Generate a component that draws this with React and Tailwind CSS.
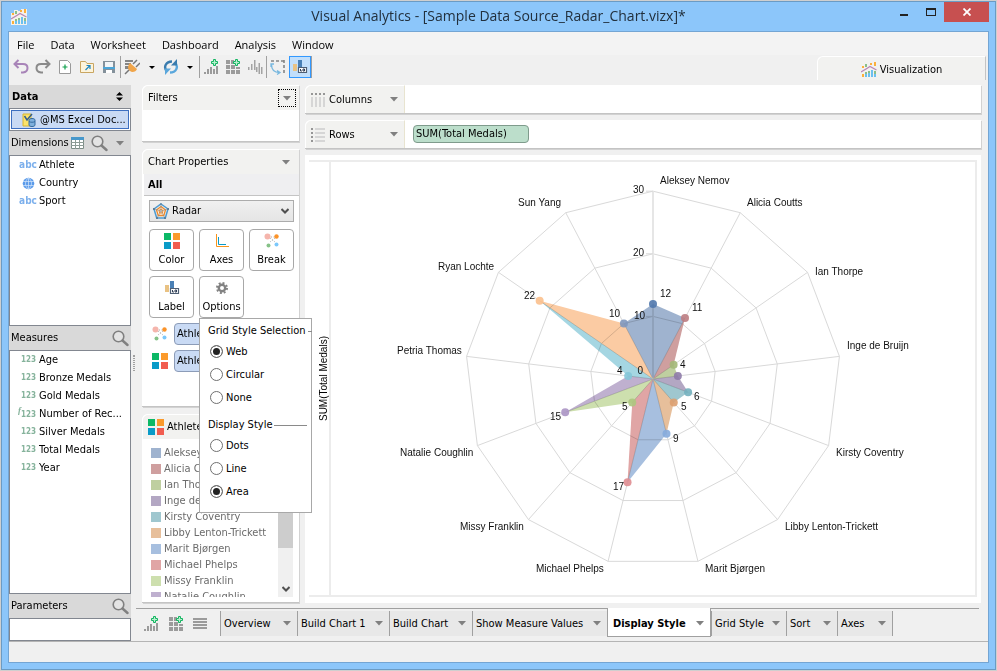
import { useState } from 'react';

const measures = [
  'Age',
  'Bronze Medals',
  'Gold Medals',
  'Number of Rec...',
  'Silver Medals',
  'Total Medals',
  'Year',
];

// color is the tint used for the legend swatch and the sector, dot is the marker
const athletes = [
  { name: 'Aleksey Nemov', value: 12, color: '#9fb3cf', dot: '#5078ad', lx: 660, ly: 184, vx: 660, vy: 297 },
  { name: 'Alicia Coutts', value: 11, color: '#cf9f9f', dot: '#bd7d82', lx: 747, ly: 206, vx: 692, vy: 311 },
  { name: 'Ian Thorpe', value: 4, color: '#bfcfa0', dot: '#a3b878', lx: 815, ly: 275, vx: 680, vy: 368 },
  { name: 'Inge de Bruijn', value: 4, color: '#b3a7c3', dot: '#8e7ba8', lx: 847, ly: 349, vx: 0, vy: 0 },
  { name: 'Kirsty Coventry', value: 6, color: '#9fc7cf', dot: '#73b0be', lx: 836, ly: 456, vx: 694, vy: 400 },
  { name: 'Libby Lenton-Trickett', value: 5, color: '#e7bf9b', dot: '#dda070', lx: 785, ly: 530, vx: 681, vy: 410 },
  { name: 'Marit Bjørgen', value: 9, color: '#a7bfdf', dot: '#86abdc', lx: 705, ly: 572, vx: 673, vy: 442 },
  { name: 'Michael Phelps', value: 17, color: '#e0a5a5', dot: '#df8c90', lx: 536, ly: 572, vx: 613, vy: 490 },
  { name: 'Missy Franklin', value: 5, color: '#cddfae', dot: '#adc77f', lx: 460, ly: 530, vx: 622, vy: 410 },
  { name: 'Natalie Coughlin', value: 15, color: '#bfb0cf', dot: '#ab95c4', lx: 400, ly: 456, vx: 550, vy: 420 },
  { name: 'Petria Thomas', value: 4, color: '#a5d6e2', dot: '#84c6d8', lx: 397, ly: 354, vx: 617, vy: 374 },
  { name: 'Ryan Lochte', value: 22, color: '#fbcba3', dot: '#fbc08d', lx: 438, ly: 270, vx: 524, vy: 299 },
  { name: 'Sun Yang', value: 10, color: '#9fb3cf', dot: '#7f97bd', lx: 518, ly: 206, vx: 609, vy: 317 },
];

const sheets = [
  { name: 'Overview', width: 'w-[77px]' },
  { name: 'Build Chart 1', width: 'w-[92px]' },
  { name: 'Build Chart', width: 'w-[83px]' },
  { name: 'Show Measure Values', width: 'w-[135px]' },
  { name: 'Display Style', width: 'w-[104px]' },
  { name: 'Grid Style', width: 'w-[75px]' },
  { name: 'Sort', width: 'w-[51px]' },
  { name: 'Axes', width: 'w-[56px]' },
];

const CX = 653;
const CY = 379;
const UNIT = 6.26;

const point = (index, value) => {
  const angle = (index * 2 * Math.PI) / athletes.length;
  return [CX + Math.sin(angle) * value * UNIT, CY - Math.cos(angle) * value * UNIT];
};

const Caret = () => (
  <svg width="8" height="5" viewBox="0 0 8 5" className="shrink-0">
    <path d="M0 0h8L4 4.500z" fill="#808080" />
  </svg>
);

const LogoIcon = ({ tile }) => (
  <svg width="16" height="16" viewBox="0 0 16 16" className="shrink-0">
    {tile && <path d="M0 4h3V1h4v1h3V0h6v16H0z" fill="#f4f1ec" />}
    <path d="M1 4h2v2H1zM9 1h2v2H9zM13 0h2v4h-2zM1 12h2v3H1z" fill="#fbb03b" />
    <path d="M4 2h2v3H4zM4 10h2v2H4zM7 9h2v2H7zM13 9h2v3h-2z" fill="#8cbf88" />
    <path d="M4 12h2v3H4zM7 11h2v4H7zM10 8h2v7h-2zM13 12h2v3h-2z" fill="#6cc0ee" />
    <path d="M0 10l5-3 4-2.500L15.500 8" fill="none" stroke="#b987b4" strokeWidth="1.300" />
  </svg>
);

const PlusBadge = ({ x, y }) => (
  <path
    transform={`translate(${x} ${y})`}
    d="M2.500 0.500h2v2h2v2h-2v2h-2v-2h-2v-2h2z"
    fill="#b9efcf"
    stroke="#12b560"
  />
);

const AddChartIcon = () => (
  <svg width="16" height="16" viewBox="0 0 16 16">
    <path d="M1 13h2v2H1zM4 10h2v5H4zM7 8h2v7H7zM10 10h2v5h-2zM13 7h2v8h-2z" fill="#9b9b9b" />
    <PlusBadge x={8} y={0} />
  </svg>
);

const AddDashboardIcon = () => (
  <svg width="16" height="16" viewBox="0 0 16 16">
    <path d="M1 1h4v4H1zM6 1h3v4H6zM1 6h4v4H1zM6 6h4v4H6zM11 8h4v2h-4zM1 11h4v4H1zM6 11h4v4H6zM11 11h4v4h-4z" fill="#9b9b9b" />
    <PlusBadge x={8} y={0} />
  </svg>
);

const SearchIcon = () => (
  <svg width="17" height="17" viewBox="0 0 17 17">
    <circle cx="6.500" cy="6.500" r="5.300" fill="#e4e4e4" stroke="#808080" strokeWidth="1.600" />
    <path d="M10.500 10.500l5 4.500" stroke="#808080" strokeWidth="2.400" strokeLinecap="round" />
  </svg>
);

const ColorIcon = () => (
  <svg width="16" height="16" viewBox="0 0 16 16" className="shrink-0">
    <path d="M0 0h7v7H0z" fill="#0cb866" />
    <path d="M9 0h7v7H9z" fill="#fb9a2c" />
    <path d="M0 9h7v7H0z" fill="#0a9bc8" />
    <path d="M9 9h7v7H9z" fill="#f15d50" />
  </svg>
);

const BreakIcon = () => (
  <svg width="16" height="16" viewBox="0 0 16 16" className="shrink-0">
    <path d="M6 5l5 4M11 5L6 9M7 4h4" stroke="#aaa" strokeDasharray="1 1.500" />
    <circle cx="3.500" cy="3.500" r="3" fill="#f5b5ac" />
    <circle cx="12.500" cy="3.500" r="2.200" fill="#fb9329" />
    <circle cx="4.500" cy="12.500" r="2" fill="#86c288" />
    <circle cx="12.500" cy="11.500" r="2" fill="#7cc8fb" />
  </svg>
);

const LabelIcon = () => (
  <svg width="16" height="16" viewBox="0 0 16 16" className="shrink-0">
    <path d="M1 5h4v7H1z" fill="#e9c283" />
    <path d="M6 1h4v7H6z" fill="#4a80b5" />
    <path d="M6.500 8.500h8v5h-8z" fill="#fff" stroke="#4f5f74" strokeWidth="1.200" />
    <path d="M8.500 10v2h1.500M11 10h1.500v2H11z" fill="none" stroke="#2f3d54" />
  </svg>
);

const AxesIcon = () => (
  <svg width="16" height="16" viewBox="0 0 16 16">
    <path d="M2.500 1v12.500H15" fill="none" stroke="#f8941d" />
    <path d="M4.500 4v7.500H12" fill="none" stroke="#0a9bc8" />
  </svg>
);

const GearIcon = () => (
  <svg width="16" height="16" viewBox="0 0 16 16">
    <circle cx="8" cy="8" r="3.200" fill="none" stroke="#828282" strokeWidth="2.400" />
    <circle cx="8" cy="8" r="5" fill="none" stroke="#828282" strokeWidth="2" strokeDasharray="1.960 1.960" />
  </svg>
);

const RadarIcon = () => (
  <svg width="16" height="16" viewBox="0 0 16 16">
    <path d="M8 1l7 5-2.700 9H3.700L1 6z" fill="#e3eef6" stroke="#4d9ad0" strokeWidth="1.500" />
    <path d="M8 3.500l4.500 3.500-1.700 5.500H5.200L3.500 7z" fill="#fdeedd" stroke="#ef8a2b" strokeWidth="1.300" />
    <path d="M8 6l2 1.500-.7 2.500H6.700L6 7.500z" fill="none" stroke="#ef8a2b" />
    <path d="M8 1v7l7-2M8 8l4 7M8 8l-4 7M8 8L1 6" stroke="#8a8a8a" strokeWidth="0.600" fill="none" />
    <path d="M7.500 0h1v2h-1zM0 5h2v2H0zM14 5h2v2h-2zM3 14h2v2H3zM11 14h2v2h-2z" fill="#5b7f9c" />
  </svg>
);

const GlobeIcon = () => (
  <svg width="13" height="13" viewBox="0 0 13 13">
    <circle cx="6.500" cy="6.500" r="5.800" fill="#5b9bea" />
    <path d="M1 4.500h11M1 8.500h11M6.500 0v13M6.500.7C2.500 4 2.500 9 6.500 12.300M6.500.7c4 3.300 4 8.300 0 11.600" fill="none" stroke="#d5e6fb" strokeWidth="0.700" />
  </svg>
);

const ToolButton = ({ label, active, width = 'w-[22px]', children }) => (
  <button
    aria-label={label}
    className={`flex h-[22px] items-center justify-center ${width} ${active ? 'border border-[#3399ff] bg-[#c2dffb]' : ''}`}
  >
    {children}
  </button>
);

const Separator = () => <div className="h-[22px] w-px bg-[#a0a0a0]" />;

const PanelHeader = ({ title, children }) => (
  <div className="flex h-[25px] shrink-0 items-center justify-between rounded-tl-md border-t border-l border-white bg-[#f2f2f0] pr-[9px] pl-[5px]">
    <h2>{title}</h2>
    {children}
  </div>
);

const Shelf = ({ title, icon, children }) => (
  <div className="flex h-[29px] shrink-0 rounded-tl-md border-b border-[#c4c4c4] bg-white shadow-[1px_1px_0_#d2d2d2]">
    <button className="flex w-[100px] shrink-0 items-center rounded-tl-md border-t border-r border-l border-t-white border-r-[#e8e4d0] border-l-white bg-[#f2f2f0] pr-[6px] pl-[5px]">
      {icon}
      <span className="flex-1 pl-1 text-left">{title}</span>
      <Caret />
    </button>
    <div className="flex flex-1 items-center pl-2">{children}</div>
  </div>
);

const CardButton = ({ label, icon }) => (
  <button className="flex h-[42px] w-[45px] flex-col items-center justify-between rounded border border-[#a8a8a8] bg-white pt-[3px] pb-[2px]">
    {icon}
    <span>{label}</span>
  </button>
);

const RadioGroup = ({ title, name, options, value, onChange }) => (
  <div role="radiogroup" aria-label={title}>
    <div className="flex h-[18px] items-center gap-[2px]">
      <span className="whitespace-nowrap">{title}</span>
      <span className="h-px min-w-1 flex-1 bg-[#8a8a8a]" />
    </div>
    {options.map(option => (
      <label key={option} className="flex h-[23px] items-center gap-[3px] pl-[2px]">
        <input
          type="radio"
          name={name}
          checked={value === option}
          onChange={() => onChange(option)}
          className="h-[13px] w-[13px] appearance-none rounded-full border border-[#707070] bg-white checked:bg-[#222] checked:shadow-[inset_0_0_0_2px_white]"
        />
        {option}
      </label>
    ))}
  </div>
);

const RadarChart = () => {
  const ring = value => athletes.map((_, i) => point(i, value).join(',')).join(' ');

  return (
    <svg viewBox="331 162 644 433" className="h-full min-h-0 w-full" fontFamily='"Liberation Sans", Arial, sans-serif' fontSize="10">
      <g fill="none" stroke="#d9d9d9">
        {[10, 20, 30].map(value => (
          <polygon key={value} points={ring(value)} />
        ))}
        {athletes.map((athlete, i) => {
          const [x, y] = point(i, 30);
          return <line key={athlete.name} x1={CX} y1={CY} x2={x} y2={y} />;
        })}
        <line x1={CX} y1={CY} x2={CX} y2={CY - 30 * UNIT} stroke="#e6e6e6" strokeWidth="2" />
        {[10, 20, 30].map(value => (
          <line key={value} x1={CX - 7} x2={CX} y1={CY - value * UNIT} y2={CY - value * UNIT} />
        ))}
      </g>
      {athletes.map((athlete, i) => {
        const next = (i + 1) % athletes.length;
        const [x1, y1] = point(i, athlete.value);
        const [x2, y2] = point(next, athletes[next].value);
        return (
          <polygon
            key={athlete.name}
            points={`${CX},${CY} ${x1},${y1} ${x2},${y2}`}
            fill={athlete.color}
            className="mix-blend-multiply"
          />
        );
      })}
      {athletes.map((athlete, i) => {
        const [x, y] = point(i, athlete.value);
        return <circle key={athlete.name} cx={x} cy={y} r="4" fill={athlete.dot} fillOpacity="0.9" />;
      })}
      <g fill="#111">
        <text x="644" y="193" textAnchor="end">30</text>
        <text x="644" y="256" textAnchor="end">20</text>
        <text x="645" y="319" textAnchor="end">10</text>
        <text x="643" y="374" textAnchor="end">0</text>
        {athletes.map(athlete => (
          <text key={athlete.name} x={athlete.lx} y={athlete.ly}>{athlete.name}</text>
        ))}
        {athletes.filter(athlete => athlete.vx).map(athlete => (
          <text key={athlete.name} x={athlete.vx} y={athlete.vy}>{athlete.value}</text>
        ))}
      </g>
    </svg>
  );
};

const App = () => {
  const [gridStyle, setGridStyle] = useState('Web');
  const [displayStyle, setDisplayStyle] = useState('Area');
  const [activeSheet, setActiveSheet] = useState('Display Style');

  return (
    <div className="h-screen bg-[#cfcfcf] p-px font-['DejaVu_Sans_Condensed','Noto_Sans',sans-serif] text-[11px] leading-4 text-black">
      <div className="flex h-full flex-col border border-[#6b9bc4] bg-[#8cc6fa] px-[6px] pb-[6px]">
        {/* Title bar */}
        <header className="flex h-[29px] shrink-0 items-start">
          <div className="flex h-full w-[102px] items-center pl-[3px]">
            <LogoIcon tile />
          </div>
          <h1 className="flex-1 pt-1 text-center font-['Open_Sans','Noto_Sans',sans-serif] text-[14px] leading-5 text-[#22303d]">
            Visual Analytics - [Sample Data Source_Radar_Chart.vizx]*
          </h1>
          <div className="flex h-5 w-[102px] items-center justify-end">
            <button aria-label="Minimize" className="flex h-5 w-[27px] items-center justify-center pt-[5px]">
              <span className="h-[2px] w-2 bg-[#222]" />
            </button>
            <button aria-label="Maximize" className="flex h-5 w-[27px] items-center justify-center">
              <span className="h-2 w-[10px] border border-t-2 border-[#222]" />
            </button>
            <button aria-label="Close" className="flex h-5 w-[45px] items-center justify-center bg-[#c75050]">
              <svg width="8" height="8" viewBox="0 0 8 8">
                <path d="M0.500 0.500l7 7M7.500 0.500l-7 7" stroke="#fff" strokeWidth="1.800" />
              </svg>
            </button>
          </div>
        </header>

        <div className="flex min-h-0 flex-1 flex-col border border-[#74a5d3] bg-[#f0f0f0]">
          <nav className="flex h-[23px] shrink-0 items-center gap-4 bg-[#f3f3f3] pl-2 pt-[2px] font-['Open_Sans','Noto_Sans',sans-serif] text-[11px]">
            {['File', 'Data', 'Worksheet', 'Dashboard', 'Analysis', 'Window'].map(item => (
              <button key={item}>{item}</button>
            ))}
          </nav>

          {/* Toolbar */}
          <div className="flex h-[30px] shrink-0 items-start justify-between pt-px pr-[2px]">
            <div className="flex items-center pl-px">
              <ToolButton label="Undo">
                <svg width="16" height="16" viewBox="0 0 16 16">
                  <path d="M5.500 1L1.500 5l4 4M2 5h8c6 0 6 8 0 8.500H8" fill="none" stroke="#a884b8" strokeWidth="2" />
                </svg>
              </ToolButton>
              <ToolButton label="Redo">
                <svg width="16" height="16" viewBox="0 0 16 16">
                  <path d="M10.500 1l4 4-4 4M14 5H6c-6 0-6 8 0 8.500h2" fill="none" stroke="#8a8a8a" strokeWidth="2" />
                </svg>
              </ToolButton>
              <ToolButton label="New">
                <svg width="16" height="16" viewBox="0 0 16 16">
                  <path d="M2.500 1.500h8l3 3v10h-11z" fill="#fff" stroke="#9a9a9a" />
                  <path d="M8 5.500v5M5.500 8h5" stroke="#10a04c" strokeWidth="1.200" />
                </svg>
              </ToolButton>
              <ToolButton label="Open">
                <svg width="16" height="16" viewBox="0 0 16 16">
                  <path d="M1.500 2.500h5l1.500 2h6.500v9h-13z" fill="#fdf4dc" stroke="#c9a662" />
                  <path d="M6.500 11l4-4M7.500 6.500h3.500V10" fill="none" stroke="#1f86c0" strokeWidth="1.200" />
                </svg>
              </ToolButton>
              <ToolButton label="Save">
                <svg width="16" height="16" viewBox="0 0 16 16">
                  <path d="M2 2h12v12H2z" fill="#84919b" />
                  <path d="M4 3h8v5H4z" fill="#f1f5f8" />
                  <path d="M2 8h12v2H2z" fill="#4aa5d8" />
                  <path d="M5 11h6v3H5z" fill="#fff" />
                </svg>
              </ToolButton>
              <Separator />
              <ToolButton label="Connect">
                <svg width="16" height="16" viewBox="0 0 16 16">
                  <path d="M1 1h8v2H1zM1 4h6v2H1zM1 7h4v3H1z" fill="#858585" />
                  <path d="M6 4l7 6c-1 3-5 4-7 2-3-2-2-6 0-8z" fill="#f0a54a" />
                  <path d="M9 5l4-4M12 8l4-4M5 11l-4 4" stroke="#777" strokeWidth="1.500" />
                </svg>
              </ToolButton>
              <ToolButton label="Connect options" width="w-[18px]">
                <svg width="6" height="3" viewBox="0 0 6 3"><path d="M0 0h6L3 3z" /></svg>
              </ToolButton>
              <ToolButton label="Refresh" width="w-5">
                <svg width="16" height="16" viewBox="0 0 16 16" fill="none">
                  <path d="M4 12.500C0 8 3 2.500 9 2.500" stroke="#3a7cae" strokeWidth="2.400" />
                  <path d="M12 3.500c4 4.500 1 10-5 10" stroke="#5aa7dc" strokeWidth="2.400" />
                  <path d="M14 0v6.500H8z" fill="#3a7cae" />
                  <path d="M2 16V9.500h6z" fill="#5aa7dc" />
                </svg>
              </ToolButton>
              <ToolButton label="Refresh options" width="w-[18px]">
                <svg width="6" height="3" viewBox="0 0 6 3"><path d="M0 0h6L3 3z" /></svg>
              </ToolButton>
              <Separator />
              <ToolButton label="Add chart"><AddChartIcon /></ToolButton>
              <ToolButton label="Add dashboard"><AddDashboardIcon /></ToolButton>
              <ToolButton label="Duplicate chart">
                <svg width="16" height="16" viewBox="0 0 16 16">
                  <path d="M1 8h1.500v3H1zM4 5h1.500v6H4zM7 1h1.500v10H7zM9 8h1.500v5H9zM11.500 4H13v11h-1.500zM14 8h1.500v7H14z" fill="#a3a3a3" />
                </svg>
              </ToolButton>
              <Separator />
              <ToolButton label="Swap axes">
                <svg width="16" height="16" viewBox="0 0 16 16" fill="none">
                  <path d="M1 2h14M14 1v14" stroke="#858585" strokeWidth="1.600" strokeDasharray="3 2" />
                  <path d="M1.500 5.500c0 5 3 8 8 8M1 8V5h3M7 11.500l3 2-3 2" stroke="#79b8df" strokeWidth="1.300" />
                </svg>
              </ToolButton>
              <ToolButton label="Show labels" active><LabelIcon /></ToolButton>
              <Separator />
            </div>
            <button className="flex h-6 w-[169px] items-center justify-center gap-[3px] rounded-tl-md border-t border-r border-l border-t-white border-r-[#c4c4c4] border-l-white bg-[#f2f2f0] pt-[2px]">
              <LogoIcon />
              Visualization
            </button>
          </div>

          {/* Workspace */}
          <div className="flex min-h-0 flex-1 border-b border-[#b4b4b4]">
            <aside className="flex w-[122px] shrink-0 flex-col">
              <div className="flex h-[23px] shrink-0 items-center justify-between bg-[#d9d9d9] pr-2 pl-[3px]">
                <h2 className="font-bold">Data</h2>
                <svg width="7" height="9" viewBox="0 0 7 9"><path d="M0 3.500L3.500 0 7 3.500zM0 5.500h7L3.500 9z" /></svg>
              </div>
              <div className="h-[23px] shrink-0 border border-[#828790] bg-white p-px">
                <button className="flex h-full w-full items-center gap-1 border border-[#3d6fc0] bg-[#c9daf4] pl-[10px] whitespace-nowrap">
                  <svg width="14" height="14" viewBox="0 0 14 14" className="shrink-0">
                    <path d="M1 1h8v12H1z" fill="#fbe36a" stroke="#d9b630" />
                    <path d="M7 7c0-2 6-2 6 0v5c0 2-6 2-6 0z" fill="#7fb0dd" stroke="#356a9f" />
                    <path d="M7 8.500c1 1 5 1 6 0" fill="none" stroke="#356a9f" />
                    <path d="M2.500 3l2.500 4 5-6" fill="none" stroke="#365f8c" strokeWidth="1.500" />
                  </svg>
                  @MS Excel Doc...
                </button>
              </div>
              <div className="flex h-6 shrink-0 items-center bg-[#d9d9d9] pl-[2px]">
                <h2>Dimensions</h2>
                <div className="flex flex-1 items-center justify-between pr-[7px] pl-[2px]">
                  <button aria-label="Table view">
                    <svg width="13" height="12" viewBox="0 0 13 12">
                      <path d="M.5.5h12v11H.5z" fill="#fff" stroke="#7c8c86" />
                      <path d="M0 0h13v3H0z" fill="#4898cb" />
                      <path d="M4.500 3v9M8.500 3v9M0 5.500h13M0 8.500h13" stroke="#8d9c96" />
                    </svg>
                  </button>
                  <button aria-label="Search dimensions"><SearchIcon /></button>
                  <button aria-label="Dimension options"><Caret /></button>
                </div>
              </div>
              <ul className="h-[171px] shrink-0 border border-[#828790] bg-white">
                {['Athlete', 'Country', 'Sport'].map(field => (
                  <li key={field} className="flex h-[18px] items-center">
                    <span className="flex w-[29px] shrink-0 justify-center pl-[7px] text-[10px] font-bold text-[#7db0ec]">
                      {field === 'Country' ? <GlobeIcon /> : 'abc'}
                    </span>
                    {field}
                  </li>
                ))}
              </ul>
              <div className="flex h-6 shrink-0 items-center justify-between bg-[#d9d9d9] pr-[2px] pl-[2px]">
                <h2>Measures</h2>
                <button aria-label="Search measures"><SearchIcon /></button>
              </div>
              <ul className="min-h-0 flex-1 border border-[#828790] bg-white">
                {measures.map(field => (
                  <li key={field} className="flex h-[18px] items-center whitespace-nowrap">
                    <span className="w-[29px] shrink-0 pr-[3px] text-right text-[8px] font-bold text-[#86b39c]">
                      {field === 'Number of Rec...' && <i className="align-super font-['Liberation_Serif',serif] text-[9px] leading-none">f</i>}123
                    </span>
                    {field}
                  </li>
                ))}
              </ul>
              <div className="flex h-6 shrink-0 items-center justify-between bg-[#d9d9d9] pr-[2px] pl-[2px]">
                <h2>Parameters</h2>
                <button aria-label="Search parameters"><SearchIcon /></button>
              </div>
              <div className="h-[23px] shrink-0 border border-[#828790] bg-white" />
            </aside>

            <div className="flex w-[5px] shrink-0 items-center justify-center">
              <div className="h-4 w-[2px] border-x border-dotted border-[#a0a0a0]" />
            </div>

            <div className="flex min-w-0 flex-1 flex-col">
              <div className="flex min-h-0 flex-1 gap-[6px] pr-[7px] pb-[5px] pl-[6px]">
                <div className="flex w-[157px] shrink-0 flex-col gap-[7px]">
                  <section className="h-[57px] shrink-0 rounded-tl-md border-b border-[#c4c4c4] bg-white shadow-[1px_1px_0_#d2d2d2]">
                    <PanelHeader title="Filters">
                      <button aria-label="Filter options" className="-mr-[6px] flex h-[18px] w-[18px] items-center justify-center border border-dotted border-black">
                        <Caret />
                      </button>
                    </PanelHeader>
                  </section>

                  <section className="h-[258px] shrink-0 rounded-tl-md border-b border-[#c4c4c4] bg-white shadow-[1px_1px_0_#d2d2d2]">
                    <PanelHeader title="Chart Properties">
                      <button aria-label="Chart property options"><Caret /></button>
                    </PanelHeader>
                    <h3 className="ml-[2px] h-[22px] border-b border-[#c4c4c4] bg-[#efeff1] pt-[3px] pl-1 font-bold">All</h3>
                    <div className="px-[5px] pt-1 pl-[7px]">
                      <div className="relative">
                        <select aria-label="Chart type" defaultValue="Radar" className="h-[22px] w-full appearance-none border border-[#acacac] bg-linear-to-b from-[#f0f0f0] to-[#e5e5e5] pl-[22px]">
                          <option>Radar</option>
                        </select>
                        <span className="pointer-events-none absolute inset-y-0 left-1 flex items-center"><RadarIcon /></span>
                        <svg width="8" height="6" viewBox="0 0 8 6" className="pointer-events-none absolute top-2 right-[5px]">
                          <path d="M0.500 1L4 4.500 7.500 1" fill="none" stroke="#505050" strokeWidth="2" />
                        </svg>
                      </div>
                      <div className="mt-[7px] flex flex-wrap gap-[5px]">
                        <CardButton label="Color" icon={<ColorIcon />} />
                        <CardButton label="Axes" icon={<AxesIcon />} />
                        <CardButton label="Break" icon={<BreakIcon />} />
                        <CardButton label="Label" icon={<LabelIcon />} />
                        <div className="relative">
                          <CardButton label="Options" icon={<GearIcon />} />
                          <div className="absolute top-[42px] left-0 z-10 flex h-[195px] w-[113px] flex-col gap-[7px] border border-[#a8a8a8] bg-white pt-[3px] pr-1 pl-2">
                            <RadioGroup title="Grid Style Selection" name="grid" options={['Web', 'Circular', 'None']} value={gridStyle} onChange={setGridStyle} />
                            <RadioGroup title="Display Style" name="display" options={['Dots', 'Line', 'Area']} value={displayStyle} onChange={setDisplayStyle} />
                          </div>
                        </div>
                      </div>
                      <div className="mt-[5px] flex flex-col gap-[5px] pl-[3px]">
                        {[<BreakIcon key="break" />, <ColorIcon key="color" />].map(icon => (
                          <div key={icon.key} className="flex items-center gap-[6px]">
                            {icon}
                            <button className="h-[22px] flex-1 rounded border border-[#8c9cb8] bg-[#c9daf4] pl-[2px] text-left">Athlete</button>
                          </div>
                        ))}
                      </div>
                    </div>
                  </section>

                  <section className="flex min-h-0 flex-1 flex-col rounded-tl-md border-b border-[#c4c4c4] bg-white shadow-[1px_1px_0_#d2d2d2]">
                    <PanelHeader title={<span className="flex items-center gap-[3px]"><ColorIcon />Athlete</span>} />
                    <div className="mb-[5px] flex min-h-0 flex-1 pr-[6px]">
                      <ul className="flex-1 overflow-hidden pt-[6px] pl-[9px] text-[#6b6b6b]">
                        {athletes.map(athlete => (
                          <li key={athlete.name} className="flex h-4 items-center gap-[3px] whitespace-nowrap">
                            <span className="h-[10px] w-[10px]" style={{ backgroundColor: athlete.color }} />
                            {athlete.name}
                          </li>
                        ))}
                      </ul>
                      <div className="flex w-[15px] shrink-0 flex-col items-center justify-between bg-[#f0f0f0] pt-4">
                        <div className="h-[93px] w-full bg-[#cdcdcd]" />
                        <svg width="8" height="6" viewBox="0 0 8 6" className="mb-[5px]">
                          <path d="M0.500 1L4 4.500 7.500 1" fill="none" stroke="#505050" strokeWidth="2" />
                        </svg>
                      </div>
                    </div>
                  </section>
                </div>

                <main className="flex min-w-0 flex-1 flex-col gap-[6px]">
                  <Shelf
                    title="Columns"
                    icon={
                      <svg width="14" height="14" viewBox="0 0 14 14">
                        <path d="M0 0h2v2H0zM4 0h2v2H4zM8 0h2v2H8zM12 0h2v2h-2z" fill="#969696" />
                        <path d="M0 4h2v10H0zM4 4h2v10H4zM8 4h2v10H8zM12 4h2v10h-2z" fill="#d6d6d6" />
                      </svg>
                    }
                  />
                  <Shelf
                    title="Rows"
                    icon={
                      <svg width="14" height="14" viewBox="0 0 14 14">
                        <path d="M0 0h2v2H0zM0 4h2v2H0zM0 8h2v2H0zM0 12h2v2H0z" fill="#969696" />
                        <path d="M4 0h10v2H4zM4 4h10v2H4zM4 8h10v2H4zM4 12h10v2H4z" fill="#d6d6d6" />
                      </svg>
                    }
                  >
                    <button className="h-[18px] w-[116px] rounded border border-[#7f9b8c] bg-[#bcdecb] pl-[2px] text-left">
                      SUM(Total Medals)
                    </button>
                  </Shelf>
                  <section className="min-h-0 flex-1 bg-white px-1 pt-[5px] pb-[6px]">
                    <div className="flex h-full border-y-2 border-r-2 border-[#ececec]">
                      <div className="flex w-[22px] shrink-0 items-center justify-end border-r-2 border-[#ececec] font-['Liberation_Sans',Arial,sans-serif] text-[10px] leading-none">
                        <span className="rotate-180 whitespace-nowrap [writing-mode:vertical-rl]">SUM(Total Medals)</span>
                      </div>
                      <RadarChart />
                    </div>
                  </section>
                </main>
              </div>

              {/* Sheet tabs */}
              <div className="mr-[9px] flex h-[33px] shrink-0 items-start border-t border-[#a0a0a0]">
                <div className="flex h-[29px] w-[84px] shrink-0 items-center gap-[9px] pl-[7px]">
                  <button aria-label="New chart"><AddChartIcon /></button>
                  <button aria-label="New dashboard"><AddDashboardIcon /></button>
                  <button aria-label="Sheet list">
                    <svg width="14" height="12" viewBox="0 0 14 12">
                      <path d="M0 0h14v2H0zM0 3h14v2H0zM0 6h14v2H0zM0 9h14v2H0z" fill="#9b9b9b" />
                    </svg>
                  </button>
                </div>
                {sheets.map(sheet => (
                  <button
                    key={sheet.name}
                    onClick={() => setActiveSheet(sheet.name)}
                    className={`flex shrink-0 items-center justify-between whitespace-nowrap pr-[6px] ${sheet.width} ${
                      sheet.name === activeSheet
                        ? '-mt-px h-[29px] border-x border-b border-[#a0a0a0] bg-white pt-[3px] pl-[5px] font-bold'
                        : 'mt-[2px] h-[25px] border-l border-[#a0a0a0] bg-[#e8e8e8] pl-[3px] last:border-r'
                    }`}
                  >
                    {sheet.name}
                    <Caret />
                  </button>
                ))}
              </div>
            </div>
          </div>

          <footer className="h-5 shrink-0" />
        </div>
      </div>
    </div>
  );
};

export default App;
